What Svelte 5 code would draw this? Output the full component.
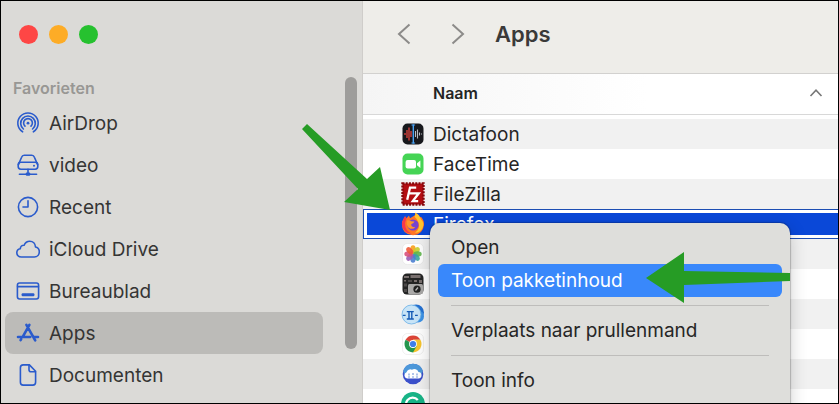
<script>
	const places = [
		{ name: 'AirDrop', icon: 'airdrop' },
		{ name: 'video', icon: 'drive' },
		{ name: 'Recent', icon: 'clock' },
		{ name: 'iCloud Drive', icon: 'cloud' },
		{ name: 'Bureaublad', icon: 'desktop' },
		{ name: 'Apps', icon: 'apps' },
		{ name: 'Documenten', icon: 'document' }
	];

	const files = [
		{ name: 'Dictafoon', icon: 'voice' },
		{ name: 'FaceTime', icon: 'facetime' },
		{ name: 'FileZilla', icon: 'filezilla' },
		{ name: 'Firefox', icon: 'firefox' },
		{ name: '', icon: 'photos' },
		{ name: '', icon: 'capture' },
		{ name: '', icon: 'gemini' },
		{ name: '', icon: 'chrome' },
		{ name: '', icon: 'cloudapp' },
		{ name: '', icon: 'grammarly' }
	];

	const petals = ['#f7a21b', '#c9cf2c', '#5fb74a', '#3aa7a0', '#4b7fd0', '#9a5fb5', '#d9517c', '#ee5a3a'];

	let place = $state('Apps');
	let selected = $state('Firefox');
	let active = $state('Toon pakketinhoud');
</script>

{#snippet placeIcon(kind)}
	<svg class="place-icon" viewBox="0 0 24 24" aria-hidden="true">
		{#if kind === 'airdrop'}
			<path d="M6.6 20.8A10.2 10.2 0 1 1 17.4 20.8" />
			<path d="M7.4 18A7.3 7.3 0 1 1 16.6 18" />
			<path d="M9 15.2A4.4 4.4 0 1 1 15 15.2" />
			<circle cx="12" cy="12.2" r="1.4" class="solid" />
		{:else if kind === 'drive'}
			<path d="M2.4 11.6 5.6 4.2Q6.3 2.2 8.2 2.2H15.8Q17.7 2.2 18.4 4.2L21.6 11.6" />
			<rect x="2.2" y="9.2" width="19.6" height="7" rx="2.6" />
			<circle cx="18" cy="12.8" r="1" class="solid" />
			<path d="M12 16.2V21M3.4 21.3H20.6" />
			<rect x="9.8" y="19.6" width="4.4" height="3.2" rx="1" class="solid" />
		{:else if kind === 'clock'}
			<circle cx="12" cy="12" r="9.6" />
			<path d="M12 5.8V12H7" />
		{:else if kind === 'cloud'}
			<path d="M5.4 20C2.4 20 .8 18 .8 15.8.8 13.6 2.3 12 4.3 11.7 4.3 9.4 6.1 8 8.1 8.2 9.2 5.5 11.3 4.2 13.7 4.2 17 4.2 19.3 6.7 19.5 10 21.7 10.5 23.3 12.3 23.3 14.8 23.3 17.8 21.2 20 18.4 20Z" />
		{:else if kind === 'desktop'}
			<rect x="1.4" y="4" width="21.2" height="16" rx="2.2" />
			<path d="M1.6 7.6H22.4" />
			<rect x="5.6" y="14.2" width="12.8" height="3" rx="1" class="solid" />
		{:else if kind === 'apps'}
			<path class="thick" d="M13.4 3.8 7 15.4M10.4 3.8 19.2 19.4M2 16H14.2M18.2 16H22M4.6 19.2 5.2 18.2" />
		{:else}
			<path d="M13.4 1.9H7.2Q4.4 1.9 4.4 4.7V19.3Q4.4 22.1 7.2 22.1H16.8Q19.6 22.1 19.6 19.3V8.3Z" />
			<path d="M13 2V6.8Q13 8.8 15 8.8H19.4" />
		{/if}
	</svg>
{/snippet}

{#snippet appIcon(kind)}
	<svg class="app-icon" viewBox="0 0 24 24" aria-hidden="true">
		{#if kind === 'voice'}
			<rect x="1.5" y="1.5" width="21" height="21" rx="5" fill="#17181c" />
			<path d="M4 11v2M6 8v8M8 5.5v13M10 9v6" stroke="#e0443f" stroke-width="1.3" />
			<path d="M12.3 2.5v19" stroke="#4aa3f5" stroke-width="1.4" />
			<path d="M10.5 3h3.6M10.5 21h3.6" stroke="#4aa3f5" stroke-width="1" />
			<path d="M14.5 9v6M16.5 7.5v9M18.5 10.5v3M20.5 11.4v1.2" stroke="#b8bcc2" stroke-width="1.1" />
		{:else if kind === 'facetime'}
			<rect x="1.5" y="1.5" width="21" height="21" rx="5" fill="#45d455" />
			<rect x="4.6" y="8" width="10.4" height="8.4" rx="2" fill="#fff" />
			<path d="M16 11.2 19.4 8.4V16L16 13.2Z" fill="#fff" />
		{:else if kind === 'filezilla'}
			<rect x="1.5" y="1.5" width="21" height="21" fill="#b30d12" stroke="#86080c" stroke-width="2.4" stroke-dasharray="2 1.2" />
			<path d="M6.2 17.8 9 5.7H15.2M7.8 11.3H12.8M12.2 11.3H17.8L11.8 19.1H17.2" fill="none" stroke="#fff" stroke-width="2.3" />
		{:else if kind === 'firefox'}
			<path d="M2.2 7.6 4 4.3 5.5 6.2 8 3.6 9 6.2 13.5 3.6Q14.6 3.2 14.2.7 17 1.9 18.6 5.2 19.5 5.4 20 4.8 23.3 8.6 23 13 21.9 22.8 12 23.3 1.3 22.7.9 12.5.8 9.5 2.2 7.6Z" fill="#ff7426" />
			<path d="M14.2.7Q18.6 2.4 20 7.5 23.5 10 21.8 15.6 19 21.6 14 20.6 19.5 17 17.5 10.5 16.5 7.3 13.5 4.8 14.8 3.3 14.2.7Z" fill="#ffc52e" />
			<path d="M2.2 7.6 4 4.3 5.5 6.2 4 11Q4 19 10.5 21.5 3.3 21.3 1.2 14.5.6 10.3 2.2 7.6Z" fill="#f7374f" />
			<circle cx="12" cy="13" r="5.6" fill="#7543cf" />
			<path d="M5.8 8.4Q8.5 7.6 10.2 9.3L13.5 9.6Q13 11.3 10.2 12.2 10 15.3 14.3 15.2 12.6 17.2 9.4 16.7 5.2 15.3 5.8 8.4Z" fill="#ff962b" />
		{:else if kind === 'photos'}
			<rect x="1.5" y="1.5" width="21" height="21" rx="5" fill="#fff" stroke="#dedede" stroke-width=".5" />
			{#each petals as color, i}
				<ellipse cx="12" cy="7.5" rx="2.7" ry="4.2" fill={color} opacity=".9" transform="rotate({i * 45} 12 12)" />
			{/each}
		{:else if kind === 'capture'}
			<rect x="1.5" y="1.5" width="21" height="21" rx="4.5" fill="#242424" />
			<path d="M3 4h5v2H3zM9.5 3h10v3h-10zM3 8h2v1.5H3zM7 8.5h4v1H7zM13 8h3v2h-3zM18 8h3v3h-3z" fill="#79706f" />
			<rect x="7" y="12" width="15" height="10" rx="1.5" fill="#aaa9a8" />
			<circle cx="16" cy="17.2" r="3.6" fill="#222" />
			<path d="M14.5 18.5 17 15.5" stroke="#bbb" stroke-width="1.2" />
			<path d="M3 11.5h3v3H3zM3 17h3v3H3z" fill="#4c4949" />
		{:else if kind === 'gemini'}
			<circle cx="15" cy="10.5" r="8" fill="#2471d2" />
			<circle cx="17" cy="14.5" r="6" fill="#3c92e7" />
			<circle cx="10.5" cy="12.5" r="9.5" fill="#c8e4f7" stroke="#67aee6" stroke-width=".8" />
			<path d="M5.8 9.6H12.8M5.8 17H12.8M8 9.6V17M10.8 9.6V17M1.8 13.4H4.6M14 13.4H16.8" fill="none" stroke="#155bb5" stroke-width="1.4" />
		{:else if kind === 'chrome'}
			<rect x="1.5" y="1.5" width="21" height="21" rx="5" fill="#fff" stroke="#e1e1e1" stroke-width=".5" />
			<path d="M12 12 4.6 7.8A8.5 8.5 0 0 1 19.4 7.8H12Z" fill="#db4437" />
			<path d="M12 12V7.8H19.4A8.5 8.5 0 0 1 12 20.5Z" fill="#f7c52d" />
			<path d="M12 12 15.6 14.2 12 20.5A8.5 8.5 0 0 1 4.6 7.8Z" fill="#25964d" />
			<circle cx="12" cy="12" r="3.9" fill="#fff" />
			<circle cx="12" cy="12" r="3.1" fill="#3f7fea" />
		{:else if kind === 'cloudapp'}
			<circle cx="12" cy="12" r="10.3" fill="#3b50cb" />
			<path d="M2.2 9A10.3 10.3 0 0 1 21.8 9L20 13H4Z" fill="#4d98da" />
			<path d="M6 16.5A3.3 3.3 0 0 1 5.5 10.2 4 4 0 0 1 11 7.7 4.5 4.5 0 0 1 17.5 10 3.3 3.3 0 0 1 18 16.5Z" fill="#fff" />
			<path d="M8 11.5v2M12 11v2M16 11.5v2M7 15h2M11 15h2M15 15h2" stroke="#7d9fde" stroke-width="1.2" />
		{:else}
			<circle cx="12" cy="12" r="12" fill="#18b487" />
			<path d="M16.8 8A6.6 6.6 0 1 0 18 14H13" fill="none" stroke="#fff" stroke-width="2.2" />
		{/if}
	</svg>
{/snippet}

<div class="window">
	<aside class="sidebar">
		<div class="lights">
			<button class="light red" aria-label="Sluit"></button>
			<button class="light orange" aria-label="Minimaliseer"></button>
			<button class="light green" aria-label="Volledig scherm"></button>
		</div>
		<h2>Favorieten</h2>
		<nav>
			{#each places as p}
				<a href="#{p.icon}" class:current={place === p.name} onclick={() => (place = p.name)}>
					{@render placeIcon(p.icon)}
					{p.name}
				</a>
			{/each}
		</nav>
		<div class="scrollbar"></div>
	</aside>

	<main>
		<header class="toolbar">
			<button class="nav-btn" aria-label="Vorige">
				<svg viewBox="0 0 14 22"><path d="M12.5 1.5 2 11 12.5 20.5" /></svg>
			</button>
			<button class="nav-btn" aria-label="Volgende">
				<svg viewBox="0 0 14 22"><path d="M1.5 1.5 12 11 1.5 20.5" /></svg>
			</button>
			<h1>Apps</h1>
		</header>

		<table>
			<thead>
				<tr>
					<th>
						<button class="sort">
							Naam
							<svg viewBox="0 0 14 10" aria-hidden="true"><path d="M1.5 8 7 2.2 12.5 8" /></svg>
						</button>
					</th>
				</tr>
			</thead>
			<tbody>
				{#each files as f}
					<tr class:selected={selected === f.name} onclick={() => (selected = f.name)}>
						<td>
							<div class="file">
								{@render appIcon(f.icon)}
								{f.name}
							</div>
						</td>
					</tr>
				{/each}
			</tbody>
		</table>
	</main>

	<div class="menu" role="menu">
		{#each [['Open', 'Toon pakketinhoud'], ['Verplaats naar prullenmand'], ['Toon info']] as group, i}
			{#if i > 0}<hr />{/if}
			{#each group as item}
				<button role="menuitem" class:active={active === item} onmouseenter={() => (active = item)}>{item}</button>
			{/each}
		{/each}
	</div>

	<!-- pointers to the selected app and the menu choice -->
	<svg class="arrows" aria-hidden="true">
		<path d="M301 128 306 123 366 178 379 166 389 209 343 201 357 188Z" />
		<path d="M645 277 683 251V270L789 272V280L683 284V302Z" />
	</svg>
</div>

<style>
	:global(body) {
		margin: 0;
		overflow: hidden;
	}
	.window {
		position: relative;
		display: flex;
		height: 100vh;
		box-sizing: border-box;
		border: 1px solid #000;
		overflow: hidden;
		background: #fff;
		color: #2b2b2b;
		font-family: Inter, 'Liberation Sans', sans-serif;
		font-size: 19px;
	}
	button {
		border: 0;
		padding: 0;
		background: none;
		color: inherit;
		font: inherit;
	}
	.sidebar {
		position: relative;
		flex: 0 0 362px;
		box-sizing: border-box;
		border-right: 1px solid #cfcdca;
		background: #dbdad7;
	}
	.lights {
		display: flex;
		gap: 11px;
		padding: 24px 18px 0;
	}
	.light {
		width: 19px;
		height: 19px;
		border-radius: 50%;
	}
	.red {
		background: #fe4645;
	}
	.orange {
		background: #fdac26;
	}
	.green {
		background: #26c12f;
	}
	h2 {
		margin: 34px 12px 3px;
		font-size: 16px;
		line-height: 21px;
		font-weight: 600;
		color: #989794;
	}
	nav a {
		display: flex;
		align-items: center;
		gap: 9px;
		height: 42px;
		margin: 0 39px 0 4px;
		padding-left: 11px;
		border-radius: 8px;
		color: #353534;
		text-decoration: none;
	}
	nav a.current {
		background: #bcbbb8;
	}
	.place-icon {
		width: 24px;
		height: 24px;
		fill: none;
		stroke: #2a5bcc;
		stroke-width: 1.6;
		stroke-linecap: round;
		stroke-linejoin: round;
	}
	.place-icon .solid {
		fill: #2a5bcc;
		stroke: none;
	}
	.place-icon .thick {
		stroke-width: 2.6;
	}
	.scrollbar {
		position: absolute;
		top: 76px;
		right: 5px;
		width: 12px;
		height: 272px;
		border-radius: 6px;
		background: #9e9d9b;
	}
	main {
		flex: 1;
		min-width: 0;
	}
	.toolbar {
		display: flex;
		align-items: center;
		height: 73px;
		box-sizing: border-box;
		padding: 0 0 6px 34px;
		gap: 40px;
		border-bottom: 1px solid #d2d1cf;
		background: #eeede9;
	}
	.nav-btn {
		width: 14px;
		height: 22px;
	}
	.nav-btn svg {
		display: block;
		fill: none;
		stroke: #8c8b89;
		stroke-width: 2;
	}
	h1 {
		margin: 0 0 0 -10px;
		font-size: 22px;
		font-weight: 600;
		color: #3a3a39;
	}
	table {
		width: 100%;
		border-collapse: collapse;
	}
	th,
	td {
		padding: 0;
	}
	th {
		border-bottom: 1px solid #d8d8d8;
		background: linear-gradient(90deg, #f5f5f5, #fff 60%);
	}
	.sort {
		display: flex;
		align-items: center;
		justify-content: space-between;
		width: 100%;
		height: 40px;
		padding: 0 15px 2px 70px;
		font-size: 16px;
		font-weight: 600;
		color: #252525;
	}
	.sort svg {
		width: 14px;
		height: 10px;
		fill: none;
		stroke: #777;
		stroke-width: 1.6;
	}
	tbody::before {
		content: '';
		display: block;
		height: 4px;
	}
	.file {
		display: flex;
		align-items: center;
		gap: 8px;
		height: 30px;
		box-sizing: border-box;
		padding-left: 38px;
		color: #262626;
	}
	tr:nth-child(odd) .file {
		background: #f1f1f1;
	}
	.selected .file {
		background: #0a48d8;
		box-shadow:
			inset 1px 1px #1c4db3,
			inset 0 -1px #1c4db3,
			inset 4px 4px #fff,
			inset 0 -4px #fff;
		color: #fff;
	}
	.app-icon {
		width: 24px;
		height: 24px;
	}
	.menu {
		position: absolute;
		top: 222px;
		left: 429px;
		width: 360px;
		height: 240px;
		box-sizing: border-box;
		padding: 8px;
		border-radius: 10px;
		background: #dededb;
		box-shadow: 0 0 1px 1px rgba(0, 0, 0, 0.2), 0 6px 18px rgba(0, 0, 0, 0.2);
	}
	.menu button {
		display: block;
		width: 100%;
		height: 33px;
		padding: 0 13px;
		border-radius: 6px;
		text-align: left;
		color: #262626;
	}
	.menu button.active {
		background: #3988fb;
		color: #fff;
	}
	hr {
		height: 1px;
		margin: 8px 13px;
		border: 0;
		background: #bebdbb;
	}
	.arrows {
		position: absolute;
		inset: 0;
		width: 100%;
		height: 100%;
		fill: #269c25;
		pointer-events: none;
	}
</style>
